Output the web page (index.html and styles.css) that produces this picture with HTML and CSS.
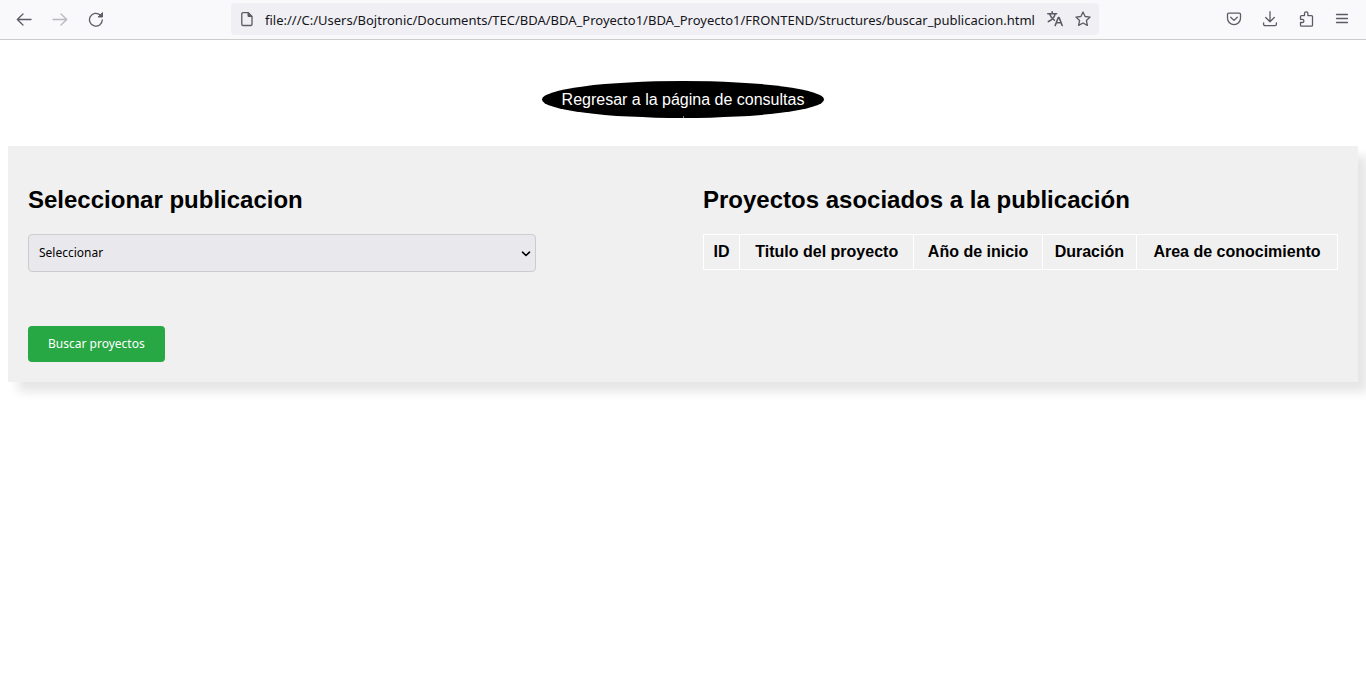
FILE: index.html
```html
<!DOCTYPE html>
<html lang="es">
<head>
<meta charset="utf-8">
<title>Buscar publicacion</title>
<link rel="stylesheet" href="styles.css">
</head>
<body>
<header class="toolbar">
  <nav class="nav-buttons">
    <button class="icon-button" type="button" aria-label="Atrás"><svg width="16" height="16" viewBox="0 0 16 16"><path d="M15 8.500H1.500M7 3 1.300 8.500 7 14"/></svg></button>
    <button class="icon-button" type="button" aria-label="Adelante" disabled><svg width="16" height="16" viewBox="0 0 16 16"><path d="M1 8.500h13.500M9 3 14.700 8.500 9 14"/></svg></button>
    <button class="icon-button" type="button" aria-label="Recargar"><svg width="16" height="16" viewBox="0 0 16 16"><path d="M14.300 9A6.400 6.400 0 1 1 12.200 4"/><path class="solid" d="M14.500 2v4h-4z"/></svg></button>
  </nav>
  <div class="address">
    <svg width="16" height="16" viewBox="0 0 16 16"><path d="M4 1.700h5.300L13 5.400v7.900a1.200 1.200 0 0 1-1.200 1.200H4a1.200 1.200 0 0 1-1.200-1.200V2.900A1.200 1.200 0 0 1 4 1.700z"/><path class="solid" d="M9 1.900V5.500h3.800z"/></svg>
    <input class="address-input" type="text" aria-label="Dirección" value="file:///C:/Users/Bojtronic/Documents/TEC/BDA/BDA_Proyecto1/BDA_Proyecto1/FRONTEND/Structures/buscar_publicacion.html">
    <button class="icon-button small" type="button" aria-label="Traducir"><svg class="bold" width="16" height="16" viewBox="0 0 16 16"><path d="M.8 2.700h8.800M5.200.8v1.900M8.200 2.900C7.400 6.200 5 9 1.400 10.600M2.700 3c1 3 2.500 4.800 4.600 6.200M8.200 14.500l3.100-8h.8l3.100 8M9.300 11.800h5"/></svg></button>
    <button class="icon-button small" type="button" aria-label="Marcar"><svg width="16" height="16" viewBox="0 0 16 16"><path d="M8 1l2.100 4.500 5 .6-3.700 3.400 1 4.900L8 12l-4.400 2.400 1-4.900L.9 6.100l5-.6z"/></svg></button>
  </div>
  <div class="tools">
    <button class="icon-button" type="button" aria-label="Pocket"><svg width="16" height="16" viewBox="0 0 16 16"><path d="M2.800 2.200h10.400a1.300 1.300 0 0 1 1.300 1.300v3.700a6.500 6.500 0 0 1-13 0V3.500a1.300 1.300 0 0 1 1.300-1.300zM4.700 6.300 8 9.400l3.300-3.100"/></svg></button>
    <button class="icon-button" type="button" aria-label="Descargas"><svg width="16" height="16" viewBox="0 0 16 16"><path d="M8 .7v10M3.700 6.500 8 10.700l4.300-4.200M1.600 11.800v1.500a1.400 1.400 0 0 0 1.400 1.400h10a1.400 1.400 0 0 0 1.400-1.400v-1.500"/></svg></button>
    <button class="icon-button" type="button" aria-label="Extensiones"><svg width="16" height="16" viewBox="0 0 16 16"><path d="M2.500 5.600a1 1 0 0 1 1-1h3V2.500a1.700 1.700 0 0 1 3.400 0v2.100h3.600a1 1 0 0 1 1 1v8.600a1 1 0 0 1-1 1h-10a1 1 0 0 1-1-1v-2.700h1.800a1.600 1.600 0 0 0 0-3.200H2.500z"/></svg></button>
    <button class="icon-button" type="button" aria-label="Menú"><svg width="16" height="16" viewBox="0 0 16 16"><path d="M2.500 3.500h11M2.500 7.500h11M2.500 11.500h11"/></svg></button>
  </div>
</header>
<main class="page">
  <a class="back-link" href="#">Regresar a la página de consultas</a>
  <div class="panel">
    <section>
      <h2 class="title"><label for="publicacion">Seleccionar publicacion</label></h2>
      <div class="select-wrap">
        <select class="select" id="publicacion"><option>Seleccionar</option></select>
        <svg class="chevron" width="10" height="6" viewBox="0 0 10 6"><path d="M1.500 1.200 5 4.500 8.500 1.200"/></svg>
      </div>
      <button class="search" type="button">Buscar proyectos</button>
    </section>
    <section>
      <h2 class="title">Proyectos asociados a la publicación</h2>
      <table class="projects">
        <thead><tr><th>ID</th><th>Titulo del proyecto</th><th>Año de inicio</th><th>Duración</th><th>Area de conocimiento</th></tr></thead>
      </table>
    </section>
  </div>
</main>
</body>
</html>
```
FILE: styles.css
```css
* { box-sizing: border-box; }
body {
  margin: 0;
  background: #fff;
  color: #000;
  font: 16px/18px "Liberation Sans", Arial, sans-serif;
  overflow-x: hidden;
}
svg { display: block; flex: none; fill: none; stroke: #5b5b66; stroke-width: 1.3; stroke-linecap: round; stroke-linejoin: round; }
.solid { fill: #5b5b66; stroke-width: 1; }
.bold { stroke-width: 1.6; }
.toolbar {
  display: grid;
  grid-template-columns: 231px 1fr 267px;
  padding: 3px 0 4px;
  background: #f9f9fb;
  border-bottom: 1px solid #ccc;
}
.nav-buttons, .tools { display: flex; gap: 4px; }
.nav-buttons { padding-left: 8px; }
.tools { justify-content: flex-end; padding-right: 8px; }
.icon-button {
  display: flex;
  align-items: center;
  justify-content: center;
  width: 32px;
  height: 32px;
  padding: 0;
  border: 0;
  background: none;
}
.icon-button:disabled { opacity: 0.4; }
.icon-button.small { width: 28px; }
.address {
  display: flex;
  align-items: center;
  height: 32px;
  padding: 0 2px 0 8px;
  border-radius: 4px;
  background: #f0f0f4;
}
.address-input {
  flex: 1;
  min-width: 0;
  height: 28px;
  margin-left: 10px;
  padding: 2px 0 0;
  border: 0;
  background: none;
  color: #15141a;
  font: 13px/20px "Noto Sans", sans-serif;
}
.page { display: flex; flex-direction: column; padding: 41px 8px 20px; }
.back-link {
  position: relative;
  align-self: center;
  padding: 10px 20px 9px;
  border-radius: 50%;
  background: #000;
  color: #fff;
  text-decoration: none;
}
.back-link::after {
  content: "";
  position: absolute;
  bottom: 0;
  left: 50%;
  width: 1px;
  height: 2px;
  background: #888;
}
.panel {
  display: grid;
  grid-template-columns: 1fr 1fr;
  gap: 40px;
  margin-top: 28px;
  padding: 20px;
  background: #f0f0f0;
  box-shadow: 10px 10px 10px rgba(0, 0, 0, 0.1);
}
.title { margin: 20px 0; font-size: 24px; line-height: 28px; }
.select-wrap { position: relative; width: 80%; }
.select {
  display: block;
  appearance: none;
  width: 100%;
  height: 38px;
  padding: 0 10px;
  border: 1px solid #ccc;
  border-radius: 4px;
  background: #e9e9ed;
  color: #000;
  font: 12px/18px "Noto Sans", sans-serif;
}
.chevron {
  position: absolute;
  top: 17px;
  right: 5px;
  stroke: #000;
  stroke-width: 1.6;
  pointer-events: none;
}
.search {
  display: block;
  height: 36px;
  margin-top: 54px;
  padding: 0 20px;
  border: 0;
  border-radius: 4px;
  background: #28a745;
  color: #fff;
  font: 12px/18px "Noto Sans", sans-serif;
}
.projects { width: 100%; border-collapse: collapse; }
.projects th { padding: 8px; border: 1px solid #fff; }
```
